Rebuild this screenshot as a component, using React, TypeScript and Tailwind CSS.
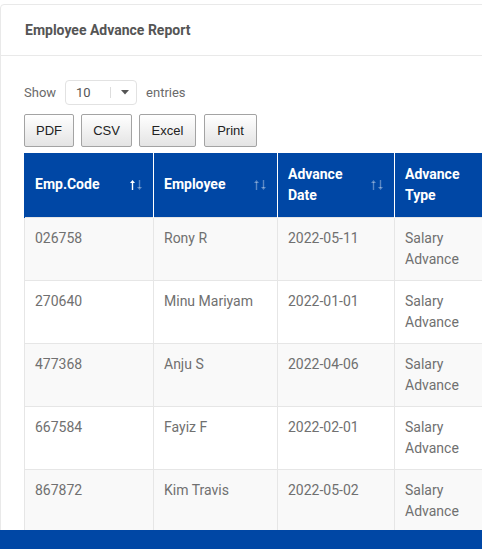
import React from "react";

const rows = [
  ["026758", "Rony R", "2022-05-11"],
  ["270640", "Minu Mariyam", "2022-01-01"],
  ["477368", "Anju S", "2022-04-06"],
  ["667584", "Fayiz F", "2022-02-01"],
  ["867872", "Kim Travis", "2022-05-02"],
];

function SortIcon({ active }: { active?: boolean }) {
  return (
    <svg width="14" height="12" viewBox="0 0 14 12" className="shrink-0">
      <g stroke={active ? "#ffffff" : "rgba(255,255,255,0.35)"} fill={active ? "#ffffff" : "rgba(255,255,255,0.35)"}>
        <line x1="3.5" y1="3" x2="3.5" y2="11" strokeWidth="1.4" />
        <path d="M1 4 L3.5 1 L6 4 Z" strokeWidth="0" />
      </g>
      <g stroke="rgba(255,255,255,0.35)" fill="rgba(255,255,255,0.35)">
        <line x1="10.5" y1="1" x2="10.5" y2="9" strokeWidth="1.4" />
        <path d="M8 8 L10.5 11 L13 8 Z" strokeWidth="0" />
      </g>
    </svg>
  );
}

export default function App() {
  const headers: { label: React.ReactNode; w: string; sort: boolean; active?: boolean }[] = [
    { label: "Emp.Code", w: "w-[129px]", sort: true, active: true },
    { label: "Employee", w: "w-[124px]", sort: true },
    { label: <>Advance<br />Date</>, w: "w-[117px]", sort: true },
    { label: <>Advance<br />Type</>, w: "w-[117px]", sort: false },
  ];
  return (
    <div className="w-[482px] h-[549px] overflow-hidden bg-white flex flex-col" style={{ fontFamily: "Roboto, 'Liberation Sans', sans-serif" }}>
      <div className="h-[530px] overflow-hidden pt-[4px]">
        <div className="w-[560px] border border-[#e9e9e9] rounded-[4px] bg-white">
          <div className="h-[51px] px-[24px] flex items-center border-b border-[#e9e9e9]">
            <h1 className="text-[14px] font-bold text-[#555] leading-none">Employee Advance Report</h1>
          </div>
          <div className="px-[23px] pt-[24px]">
            <div className="flex items-center h-[25px] text-[13px] text-[#6a6a6a]">
              <span>Show</span>
              <div className="ml-[9px] w-[72px] h-[25px] border border-[#e2e2e2] rounded-[4px] flex items-center pl-[10px] text-[#555]">
                <span className="w-[34px]">10</span>
                <span className="w-px h-[11px] bg-[#ddd]" />
                <svg width="8" height="5" viewBox="0 0 8 5" className="ml-[10px]">
                  <path d="M0 0 L8 0 L4 4.5 Z" fill="#555" />
                </svg>
              </div>
              <span className="ml-[9px]">entries</span>
            </div>
            <div className="flex gap-[7px] mt-[9px]">
              {["PDF", "CSV", "Excel", "Print"].map((b, i) => (
                <button
                  key={b}
                  className={`h-[33px] ${["w-[50px]", "w-[51px]", "w-[57px]", "w-[53px]"][i]} ${i === 3 ? "ml-[1px]" : ""} border border-[#a3a3a3] rounded-[2px] bg-gradient-to-b from-white to-[#e4e4e4] text-[13px] text-[#222]`}
                  style={{ fontFamily: "'Liberation Sans', Arial, sans-serif" }}
                >
                  {b}
                </button>
              ))}
            </div>
            <table className="mt-[6px] border-collapse table-fixed w-[487px] text-[14px] leading-[21px]">
              <thead>
                <tr className="bg-[#0047a5] text-white">
                  {headers.map((h, i) => (
                    <th
                      key={i}
                      className={`${h.w} h-[64px] px-[10px] py-[10px] text-left font-bold align-middle border-l border-white first:border-l-[#0047a5]`}
                    >
                      <div className="flex items-center justify-between">
                        <span>{h.label}</span>
                        {h.sort && <SortIcon active={h.active} />}
                      </div>
                    </th>
                  ))}
                </tr>
              </thead>
              <tbody>
                {rows.map((r, ri) => (
                  <tr key={ri} className={ri % 2 === 0 ? "bg-[#f9f9f9]" : "bg-white"}>
                    {r.map((c, ci) => (
                      <td
                        key={ci}
                        className="px-[10px] pt-[10px] pb-[10px] align-top text-[#707070] border border-[#e6e6e6]"
                      >
                        {c}
                      </td>
                    ))}
                    <td className="px-[10px] pt-[10px] pb-[10px] align-top text-[#707070] border border-[#e6e6e6]">
                      Salary
                      <br />
                      Advance
                    </td>
                  </tr>
                ))}
              </tbody>
            </table>
          </div>
        </div>
      </div>
      <div className="h-[19px] bg-[#0047a5]" />
    </div>
  );
}
